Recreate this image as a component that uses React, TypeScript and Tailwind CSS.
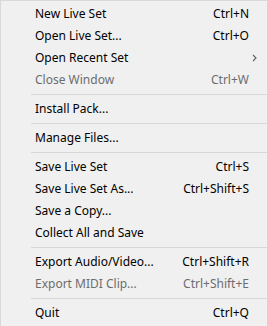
import React from "react";

type Item =
  | { sep: true }
  | { label: string; shortcut?: string; disabled?: boolean; arrow?: boolean; sep?: false };

const items: Item[] = [
  { label: "New Live Set", shortcut: "Ctrl+N" },
  { label: "Open Live Set...", shortcut: "Ctrl+O" },
  { label: "Open Recent Set", arrow: true },
  { label: "Close Window", shortcut: "Ctrl+W", disabled: true },
  { sep: true },
  { label: "Install Pack..." },
  { sep: true },
  { label: "Manage Files..." },
  { sep: true },
  { label: "Save Live Set", shortcut: "Ctrl+S" },
  { label: "Save Live Set As...", shortcut: "Ctrl+Shift+S" },
  { label: "Save a Copy..." },
  { label: "Collect All and Save" },
  { sep: true },
  { label: "Export Audio/Video...", shortcut: "Ctrl+Shift+R" },
  { label: "Export MIDI Clip...", shortcut: "Ctrl+Shift+E", disabled: true },
  { sep: true },
  { label: "Quit", shortcut: "Ctrl+Q" },
];

export default function App() {
  return (
    <div
      className="w-[267px] h-[326px] bg-[#f0f0f0] border-l border-t border-[#d9d9d9] pt-[2px] text-[12px] text-black overflow-hidden"
      style={{ fontFamily: '"Noto Sans", "Open Sans", sans-serif' }}
    >
      {items.map((it, i) =>
        it.sep ? (
          <div key={i} className="h-[7px] flex items-center pl-[30px]">
            <div className="h-px w-full bg-[#d7d7d7]" />
          </div>
        ) : (
          <div
            key={i}
            className={`h-[22px] flex items-center pl-[34px] pr-[18px] ${
              it.disabled ? "text-[#6d6d6d]" : "text-black"
            }`}
          >
            <span className="flex-1 whitespace-nowrap">{it.label}</span>
            {it.shortcut && <span className="whitespace-nowrap">{it.shortcut}</span>}
            {it.arrow && (
              <svg width="5" height="8" viewBox="0 0 5 8" className="mr-[-8px] ml-auto">
                <path d="M1 1 L4 4 L1 7" stroke="#606060" strokeWidth="1.1" fill="none" />
              </svg>
            )}
          </div>
        )
      )}
    </div>
  );
}
